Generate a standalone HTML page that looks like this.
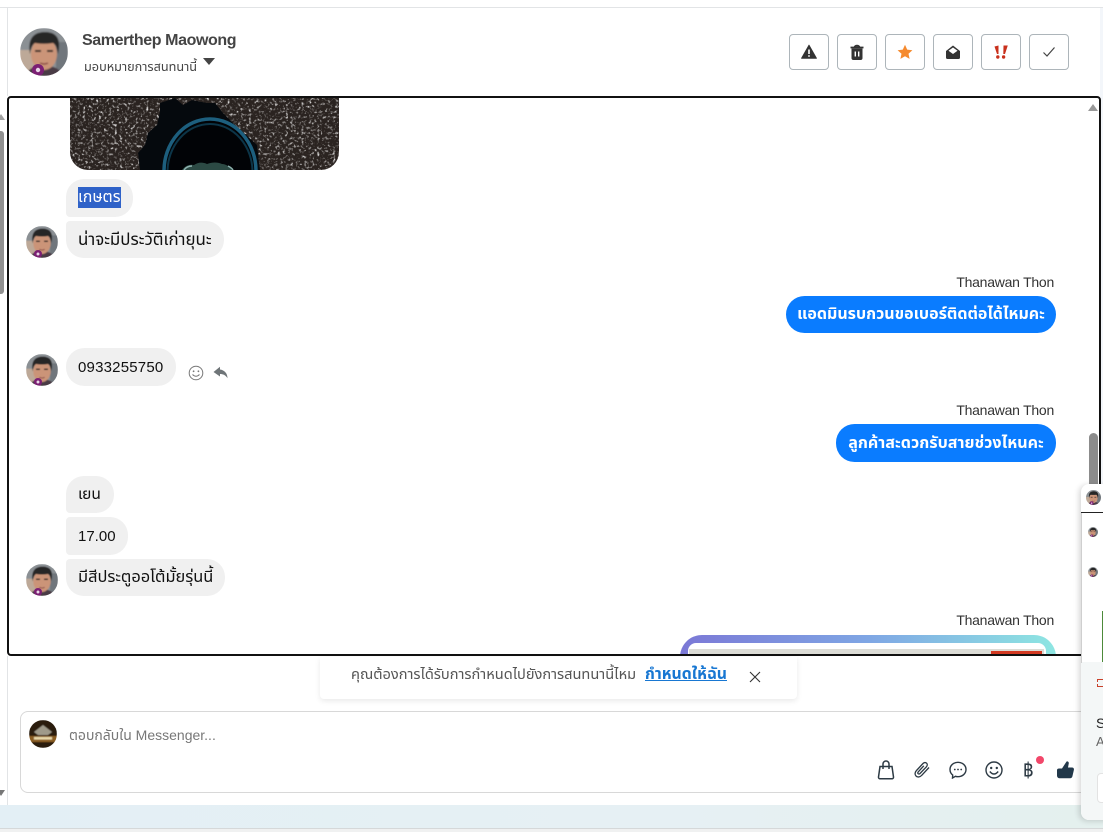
<!DOCTYPE html>
<html><head><meta charset="utf-8"><style>
html,body{margin:0;padding:0;background:#fff}
#r{position:relative;width:1103px;height:832px;overflow:hidden;background:#fff;font-family:"Liberation Sans","Noto Sans Thai","Noto Sans CJK SC",sans-serif;color:#1c1e21}
#r *{box-sizing:border-box}
.a{position:absolute}
.av{position:absolute;width:32px;height:32px}
.b{position:absolute;height:37px;border-radius:18.5px;background:#f0f0f0;font-size:16.9px;line-height:37px;padding:0 12px;white-space:nowrap;color:#111}
.bl{position:absolute;height:37px;border-radius:18.5px;background:#0a7cff;font-size:16px;font-weight:700;line-height:37px;color:#fff;text-align:center;white-space:nowrap}
.n{position:absolute;font-size:14px;letter-spacing:-.25px;line-height:18px;color:#333;right:45px;white-space:nowrap}
.btn{position:absolute;top:34px;width:40px;height:36px;border:1px solid #adb5ba;border-radius:4px;background:#fff;display:flex;align-items:center;justify-content:center}
</style></head><body><div id="r">
<svg width="0" height="0" style="position:absolute"><defs>
<clipPath id="c"><circle cx="24" cy="24" r="24"/></clipPath>
<filter id="sf"><feGaussianBlur stdDeviation=".7"/></filter>
<symbol id="face" viewBox="0 0 48 48"><g clip-path="url(#c)"><g filter="url(#sf)">
<rect width="48" height="48" fill="#8b9094"/><rect y="22" width="14" height="26" fill="#bda998"/><rect x="36" y="14" width="12" height="34" fill="#70767b"/>
<path d="M6 48C8 40 14 38 24 38s16 2 18 10z" fill="#4a3a44"/>
<ellipse cx="24" cy="26" rx="13" ry="16" fill="#cb9478"/>
<path d="M10 26C7 9 15 4 25 4s17 5 13 22c-1-6-2-9-5-11-6 1-12 1-18 0-3 2-4 5-5 11z" fill="#272527"/>
<path d="M15 23h6M27 23h6" stroke="#2b2222" stroke-width="2"/>
<path d="M20 35q4 2 8 0" stroke="#8a4a45" stroke-width="1.5" fill="none"/>
</g><circle cx="18" cy="42" r="6" fill="#7b1f73"/><circle cx="18" cy="42" r="2.2" fill="#e8d6e6"/>
</g></symbol>
<filter id="g" x="0" y="0" width="100%" height="100%"><feTurbulence type="fractalNoise" baseFrequency=".38" numOctaves="2" seed="7"/><feColorMatrix values="0 0 0 0 .44 0 0 0 0 .39 0 0 0 0 .34 1.8 1.8 0 0 -1.85"/><feComposite in="SourceGraphic" operator="in"/></filter>
</defs></svg>

<div class="a" style="left:0;top:7px;width:1103px;height:1px;background:#e2e4e6"></div>
<div class="a" style="left:7px;top:8px;width:1px;height:88px;background:#e2e4e6"></div>
<div class="a" style="left:7px;top:656px;width:1px;height:150px;background:#e2e4e6"></div>
<div class="a" style="left:1100px;top:8px;width:3px;height:476px;background:#f3f6fa"></div>

<svg class="a" style="left:20px;top:28px" width="48" height="48"><use href="#face" width="48" height="48"/></svg>
<div class="a" style="left:82px;top:31px;font-size:16px;letter-spacing:-.4px;line-height:20px;font-weight:700;color:#444;white-space:nowrap">Samerthep Maowong</div>
<div class="a" style="left:84px;top:58px;font-size:12.7px;line-height:18px;color:#444;white-space:nowrap">มอบหมายการสนทนานี้</div>
<div class="a" style="left:203px;top:58px;border:6px solid transparent;border-top:7px solid #444;border-bottom:0"></div>

<div class="btn" style="left:789px"><svg width="16" height="16" viewBox="0 0 16 16"><path d="M8 1.200 15.400 14.200H.6z" fill="#333" stroke="#333" stroke-width="1" stroke-linejoin="round"/><path d="M8 5.500v4.500M8 11.200v1.600" stroke="#fff" stroke-width="1.600"/></svg></div>
<div class="btn" style="left:837px"><svg width="16" height="17" viewBox="0 0 16 17"><path d="M1.500 3.500h13M5.500 3.500c0-2.500 5-2.500 5 0" stroke="#333" stroke-width="1.700" fill="none"/><path d="M2.500 4.500h11V14a2 2 0 0 1-2 2h-7a2 2 0 0 1-2-2z" fill="#333"/><path d="M6.300 7.500v5M9.700 7.500v5" stroke="#fff" stroke-width="1.400"/></svg></div>
<div class="btn" style="left:885px"><svg width="16" height="16" viewBox="0 0 16 16"><path d="M8 .8l2.200 4.800 5.200.6-3.900 3.500 1.100 5.200L8 12.200l-4.600 2.700 1.100-5.200L.6 6.200l5.200-.6z" fill="#f58a2e"/></svg></div>
<div class="btn" style="left:933px"><svg width="16" height="16" viewBox="0 0 16 16"><path d="M1 7 8 1.500 15 7v6.500a1.500 1.500 0 0 1-1.500 1.500h-11A1.500 1.500 0 0 1 1 13.500z" fill="#333"/><path d="M3.500 6.800 8 3.500l4.500 3.300L8 10z" fill="#fff"/></svg></div>
<div class="btn" style="left:981px"><svg width="16" height="16" viewBox="0 0 16 16"><path d="M1.500 2.500 5.500 1.500 5.500 10H4zM10.500 1.500h4.300L12 10h-1.700z" fill="#c9301c"/><circle cx="4.800" cy="13" r="1.700" fill="#c9301c"/><circle cx="10.600" cy="13" r="1.700" fill="#c9301c"/></svg></div>
<div class="btn" style="left:1029px"><svg width="14" height="12" viewBox="0 0 14 12"><path d="M1.500 6.500 5 10l7.500-8.500" stroke="#444" stroke-width="1.200" fill="none"/></svg></div>

<!-- left scrollbar -->
<div class="a" style="left:0;top:114px;border:4px solid transparent;border-bottom:6px solid #a0a0a0;border-top:0;margin-left:-3px"></div>
<div class="a" style="left:0;top:131px;width:4px;height:163px;background:#909090;border-radius:0 3px 3px 0"></div>
<div class="a" style="left:0;top:790px;border:4px solid transparent;border-top:6px solid #777;border-bottom:0;margin-left:-3px"></div>

<!-- message panel -->
<div class="a" style="left:7px;top:96px;width:1094px;height:560px;border:2px solid #111;border-radius:4px;overflow:hidden;background:#fff">
  <svg class="a" style="left:61px;top:0" width="269" height="72" viewBox="0 0 269 72">
    <defs><clipPath id="im"><path d="M0 0H269V54a18 18 0 0 1-18 18H18A18 18 0 0 1 0 54z"/></clipPath></defs>
    <g clip-path="url(#im)">
      <rect width="269" height="72" fill="#2a2320"/>
      <rect width="269" height="72" fill="#fff" filter="url(#g)"/>
      <path d="M70 72 68 55 75 47 78 35 87 27 90 14 90 5 105 0 113 7 122 2 137 5 145 5 153 15 165 27 187 47 190 72z" fill="#05090d"/>
      <ellipse cx="140" cy="73" rx="46" ry="52" fill="#010306" stroke="#1d5f7e" stroke-width="3.500"/>
      <ellipse cx="140" cy="74" rx="42.500" ry="48" fill="none" stroke="#0c3548" stroke-width="2"/>
      <path d="M112 72c3-4 7-6 12-5 4-3 9-3 13-1 5-2 11-2 15 0 4 0 8 3 11 6z" fill="#2c4a44"/>
      <path d="M114 72c2-3 5-4 8-4M158 68c2 1 4 2 5 4" stroke="#8fb3b0" stroke-width="1.500" fill="none"/>
    </g>
  </svg>

  <div class="b" style="left:57px;top:81px;border-radius:18px 18px 18px 4px;height:38px;width:67px;font-size:16px"><span style="background:#2f62c8;color:#fff;display:inline-block;line-height:21px">เกษตร</span></div>
  <svg class="av" style="left:17px;top:128px"><use href="#face" width="32" height="32"/></svg>
  <div class="b" style="left:57px;top:123px;border-radius:4px 18px 18px 18px">น่าจะมีประวัติเก่ายุนะ</div>

  <div class="n" style="top:175px">Thanawan Thon</div>
  <div class="bl" style="left:777px;top:198px;width:270px">แอดมินรบกวนขอเบอร์ติดต่อได้ไหมคะ</div>

  <svg class="av" style="left:17px;top:256px"><use href="#face" width="32" height="32"/></svg>
  <div class="b" style="left:57px;top:250px;height:38px;line-height:40px;width:110px;font-size:15px;letter-spacing:.2px">0933255750</div>
  <svg class="a" style="left:179px;top:267px" width="16" height="16" viewBox="0 0 16 16"><circle cx="8" cy="8" r="6.800" fill="none" stroke="#777" stroke-width="1"/><circle cx="5.600" cy="6.300" r=".9" fill="#777"/><circle cx="10.400" cy="6.300" r=".9" fill="#777"/><path d="M4.500 9.500q3.500 3.500 7 0" fill="none" stroke="#777"/></svg>
  <svg class="a" style="left:204px;top:268px" width="15" height="13" viewBox="0 0 15 13"><path d="M7 .8 .5 6 7 10.500V8c3 0 5.500 1 7.500 4.200C14.500 7 11 4 7 3.500z" fill="#6f7578"/></svg>

  <div class="n" style="top:303px">Thanawan Thon</div>
  <div class="bl" style="left:827px;top:326px;width:220px;height:38px;line-height:38px;font-size:16.1px">ลูกค้าสะดวกรับสายช่วงไหนคะ</div>

  <div class="b" style="left:57px;top:378px;width:48px;border-radius:18px 18px 18px 4px;font-size:15.5px">เยน</div>
  <div class="b" style="left:57px;top:419px;width:62px;height:38px;line-height:40px;font-size:15px;border-radius:4px 18px 18px 4px">17.00</div>
  <svg class="av" style="left:17px;top:466px"><use href="#face" width="32" height="32"/></svg>
  <div class="b" style="left:57px;top:461px;border-radius:4px 18px 18px 18px;font-size:16.4px">มีสีประตูออโต้มั้ยรุ่นนี้</div>

  <div class="n" style="top:513px">Thanawan Thon</div>
  <div class="a" style="left:671px;top:537px;width:376px;height:40px;border-radius:22px 22px 0 0;background:linear-gradient(90deg,#7b78d6,#7fa6e4 50%,#8ee6e2)"></div>
  <div class="a" style="left:679px;top:545px;width:358px;height:30px;border-radius:8px 8px 0 0;background:#fff"></div>
  <div class="a" style="left:680px;top:551px;width:355px;height:10px;background:#dcdcd6"></div>
  <div class="a" style="left:982px;top:553px;width:51px;height:8px;background:#d33a22"></div>

  <!-- scrollbar -->
  <div class="a" style="left:1079px;top:6px;border:5px solid transparent;border-bottom:7px solid #999;border-top:0"></div>
  <div class="a" style="left:1080px;top:335px;width:9px;height:60px;background:#8c8c8c;border-radius:5px 5px 0 0"></div>
</div>

<!-- assign banner -->
<div class="a" style="left:320px;top:657px;width:477px;height:42px;background:#fff;border-radius:0 0 4px 4px;box-shadow:0 2px 6px rgba(0,0,0,.09)"></div>
<div class="a" style="left:351px;top:666px;font-size:14.600px;line-height:18px;color:#555;white-space:nowrap">คุณต้องการได้รับการกำหนดไปยังการสนทนานี้ไหม</div>
<div class="a" style="left:645px;top:666px;font-size:15.800px;line-height:18px;font-weight:700;color:#1877d2;text-decoration:underline;white-space:nowrap">กำหนดให้ฉัน</div>
<svg class="a" style="left:749px;top:671px" width="12" height="12" viewBox="0 0 12 12"><path d="M1 1l10 10M11 1 1 11" stroke="#333" stroke-width="1.100"/></svg>

<!-- composer -->
<div class="a" style="left:20px;top:711px;width:1070px;height:82px;border:1px solid #d8d8d8;border-radius:8px;background:#fff"></div>
<svg class="a" style="left:29px;top:720px" width="28" height="28" viewBox="0 0 28 28"><defs><clipPath id="c2"><circle cx="14" cy="14" r="14"/></clipPath><filter id="sf2"><feGaussianBlur stdDeviation=".5"/></filter></defs><g clip-path="url(#c2)"><g filter="url(#sf2)"><rect width="28" height="28" fill="#2a1c10"/><rect y="16" width="28" height="6" fill="#8a5d24"/><path d="M5 12 14 5l9 7-4 3H9z" fill="#9f9a8a"/><rect x="5" y="17" width="18" height="2.500" fill="#e8d8a8"/></g></g></svg>
<div class="a" style="left:69px;top:726px;font-size:14px;line-height:18px;color:#777;white-space:nowrap">ตอบกลับใน Messenger...</div>

<svg class="a" style="left:877px;top:760px" width="18" height="20" viewBox="0 0 18 20"><path d="M3 6.500h12L16.500 17a1.500 1.500 0 0 1-1.500 1.700H3A1.500 1.500 0 0 1 1.500 17z" fill="none" stroke="#2d3a44" stroke-width="1.500"/><path d="M6 9V4a3 3 0 0 1 6 0v5" fill="none" stroke="#2d3a44" stroke-width="1.500"/></svg>
<svg class="a" style="left:913px;top:761px" width="18" height="18" viewBox="0 0 18 18"><path d="M16 6.500 8.500 14.500c-1.500 1.700-4 2-5.500.5s-1-4 .5-5.500l6.500-7c1-1.100 2.600-1.300 3.600-.3s.8 2.500-.2 3.600L7 12.500c-.6.600-1.400.7-1.900.2s-.3-1.300.2-1.900l5.500-6" fill="none" stroke="#2d3a44" stroke-width="1.300"/></svg>
<svg class="a" style="left:949px;top:761px" width="18" height="18" viewBox="0 0 18 18"><path d="M9 1.300c4.300 0 8 3 8 7.200s-3.700 7.200-8 7.200c-.9 0-1.700-.1-2.500-.4L3.500 17l.2-3C2 12.700 1 10.700 1 8.500 1 4.300 4.700 1.300 9 1.300z" fill="none" stroke="#2d3a44" stroke-width="1.400"/><circle cx="5.800" cy="8.500" r=".9" fill="#2d3a44"/><circle cx="9" cy="8.500" r=".9" fill="#2d3a44"/><circle cx="12.200" cy="8.500" r=".9" fill="#2d3a44"/></svg>
<svg class="a" style="left:985px;top:761px" width="18" height="18" viewBox="0 0 18 18"><circle cx="9" cy="9" r="8" fill="none" stroke="#2d3a44" stroke-width="1.400"/><circle cx="6.200" cy="7" r="1.200" fill="#2d3a44"/><circle cx="11.800" cy="7" r="1.200" fill="#2d3a44"/><path d="M4.800 10.500q4.200 5 8.400 0" fill="none" stroke="#2d3a44" stroke-width="1.400"/></svg>
<div class="a" style="left:1023px;top:760px;font-size:18px;line-height:20px;color:#2d3a44;transform:scaleY(1.150);font-weight:400">฿</div>
<div class="a" style="left:1036px;top:756px;width:8px;height:8px;border-radius:50%;background:#f2476a"></div>
<svg class="a" style="left:1057px;top:761px" width="17" height="18" viewBox="0 0 17 18"><path d="M0 9c0-1 1-1.500 2-1.500h3L9.500 .6c1.300-.6 2.400.4 2.300 1.700L11 6.500h4c1.500 0 2.200 1.200 1.900 2.400l-1.500 6.500c-.3 1.200-1.100 1.800-2.300 1.800H3c-2 0-3-1-3-3z" fill="#22384a"/></svg>

<!-- bottom strip -->
<div class="a" style="left:0;top:805px;width:1103px;height:23px;background:linear-gradient(90deg,#e3eff5,#e6f0f4 60%,#e4f0ee)"></div>
<div class="a" style="left:0;top:828px;width:1103px;height:4px;background:#f0f1f1;border-top:1px solid #d5d8d9"></div>

<!-- right popup -->
<div class="a" style="left:1081px;top:484px;width:40px;height:336px;background:#fff;border-radius:8px;box-shadow:-2px 1px 6px rgba(0,0,0,.16)"></div>
<div class="a" style="left:1081px;top:662px;width:40px;height:158px;background:#f4f7f7;border-radius:0 0 0 8px"></div>
<div class="a" style="left:1081px;top:512px;width:22px;height:1px;background:#222"></div>
<div class="a" style="left:1081px;top:513px;width:1px;height:150px;background:#cfcfcf"></div>
<svg class="a" style="left:1086px;top:490px" width="15" height="15"><use href="#face" width="15" height="15"/></svg>
<svg class="a" style="left:1088px;top:527px" width="10" height="10"><use href="#face" width="10" height="10"/></svg>
<svg class="a" style="left:1088px;top:567px" width="10" height="10"><use href="#face" width="10" height="10"/></svg>
<div class="a" style="left:1102px;top:611px;width:1px;height:51px;background:#4d8a3a"></div>
<div class="a" style="left:1097px;top:679px;width:6px;height:8px;border:1px dashed #c9402a;border-right:0"></div>
<div class="a" style="left:1096px;top:715px;font-size:14px;line-height:16px;color:#222">S</div>
<div class="a" style="left:1096px;top:734px;font-size:13px;line-height:16px;color:#666">A</div>
<div class="a" style="left:1097px;top:773px;width:10px;height:30px;background:#fff;border:1px solid #e3e3e3;border-radius:4px"></div>
</div></body></html>
